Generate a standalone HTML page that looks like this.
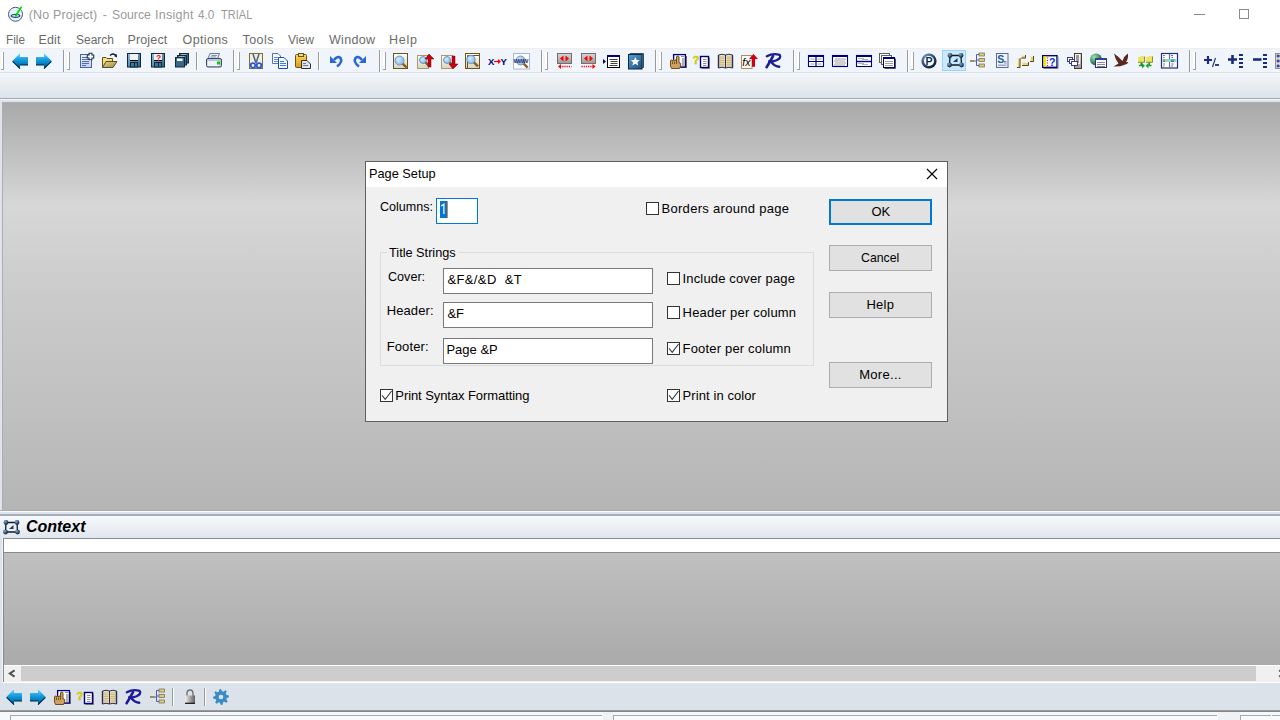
<!DOCTYPE html>
<html><head><meta charset="utf-8">
<style>
*{margin:0;padding:0;box-sizing:border-box}
html,body{width:1280px;height:720px;overflow:hidden;background:#fff;font-family:"Liberation Sans",sans-serif;position:relative}
.a{position:absolute}
.t{position:absolute;white-space:pre;font-family:"Liberation Sans",sans-serif}
.edit{position:absolute;background:#fff;border:1px solid #7a7a7a}
.btn{position:absolute;background:#e1e1e1;border:1px solid #adadad;width:103px;height:26px}
.cb{position:absolute;width:13px;height:13px;border:1px solid #333;background:#fff}
.sep{position:absolute;width:1px;background:#a0a0a0}
svg{position:absolute;overflow:visible}
</style></head><body>
<!-- title bar -->
<div class="a" style="left:1194px;top:14px;width:11px;height:1px;background:#8a8a8a"></div>
<div class="a" style="left:1239px;top:9px;width:10px;height:10px;border:1px solid #8a8a8a"></div>

<!-- toolbars -->
<div class="a" style="left:0;top:48px;width:1280px;height:1px;background:#efefef"></div>
<div class="a" style="left:0;top:49px;width:1280px;height:1px;background:#f2f4f8"></div>
<div class="a" style="left:0;top:50px;width:1280px;height:22px;background:#f0f4fb"></div>
<div class="a" style="left:0;top:72px;width:1280px;height:1px;background:#dde2e9"></div>
<div class="a" style="left:0;top:73px;width:1280px;height:25px;background:linear-gradient(#f3f6fa,#dde3ea)"></div>
<div class="a" style="left:0;top:98px;width:1280px;height:1px;background:#a3a8ae"></div>
<div class="a" style="left:0;top:99px;width:1280px;height:1px;background:#f4f7fc"></div>
<div class="a" style="left:0;top:100px;width:1280px;height:410px;background:#dfe4eb"></div>
<div class="a" style="left:2px;top:102px;width:1278px;height:408px;border-left:1px solid #a9aeb4;border-top:1px solid #a9aeb4;background:linear-gradient(#a9a9a9 0px,#d7d7d7 102px,#cacaca 197px,#c1c1c1 297px,#b5b5b5 407px)"></div>
<div class="a" style="left:0;top:510px;width:1280px;height:1px;background:#acacac"></div>
<div class="a" style="left:0;top:511px;width:1280px;height:1px;background:#f5f8fc"></div>
<div class="a" style="left:0;top:512px;width:1280px;height:2px;background:#dde3ea"></div>
<div class="a" style="left:0;top:514px;width:1280px;height:2px;background:#a6adb6"></div>
<div class="a" style="left:0;top:516px;width:1280px;height:22px;background:linear-gradient(#f6f9fd,#e0e6ee)"></div>
<div class="a" style="left:0;top:538px;width:3px;height:145px;background:#dde3ea"></div>
<div class="a" style="left:2px;top:538px;width:1px;height:145px;background:#f0f4f8"></div>
<div class="a" style="left:3px;top:538px;width:1277px;height:15px;border:1px solid #8a8a8a;border-right:none;background:#fff"></div>
<div class="a" style="left:3px;top:553px;width:1277px;height:112px;border-left:1px solid #8a8a8a;background:linear-gradient(#c0c0c0,#aaaaaa)"></div>
<div class="a" style="left:4px;top:665px;width:1276px;height:1px;background:#fff"></div>
<div class="a" style="left:3px;top:666px;width:1277px;height:16px;border-left:1px solid #8a8a8a;background:#f0f0f0"></div>
<div class="a" style="left:21px;top:666px;width:1235px;height:15px;background:#cdcdcd"></div>
<svg style="left:0px;top:660px" width="20" height="20"><path d="M14.6 10.3 L9.8 13.5 L14.6 16.7" fill="none" stroke="#505050" stroke-width="2"/></svg>
<svg style="left:1270px;top:660px" width="20" height="20"><path d="M9.2 10.3 L14 13.5 L9.2 16.7" fill="none" stroke="#505050" stroke-width="2"/></svg>
<div class="a" style="left:3px;top:538px;width:1px;height:144px;background:#8a8a8a"></div>
<div class="a" style="left:3px;top:682px;width:1277px;height:1px;background:#fff"></div>
<div class="a" style="left:0;top:683px;width:1280px;height:27px;background:#dce2ea"></div>
<div class="a" style="left:0;top:710px;width:1280px;height:1px;background:#9a9a9a"></div>
<div class="a" style="left:0;top:711px;width:1280px;height:1px;background:#858585"></div>
<div class="a" style="left:0;top:712px;width:1280px;height:8px;background:#f5f8fc"></div>
<div class="a" style="left:10px;top:715px;width:592px;height:10px;border-left:1px solid #a5aab2;border-top:1px solid #a5aab2;background:#f8fafc"></div>
<div class="a" style="left:613px;top:715px;width:604px;height:10px;border-left:1px solid #a5aab2;border-top:1px solid #a5aab2;background:#f8fafc"></div>
<div class="a" style="left:1240px;top:715px;width:31px;height:10px;border-left:1px solid #a5aab2;border-top:1px solid #a5aab2;background:#f8fafc"></div>
<div class="a" style="left:1272px;top:715px;width:8px;height:10px;border-top:1px solid #a5aab2;background:#f8fafc"></div>
<div class="a" style="left:1218px;top:712px;width:22px;height:8px;background:#eef1f6"></div>
<div class="a" style="left:603px;top:712px;width:10px;height:8px;background:#eef1f6"></div>

<!-- dialog -->
<div class="a" style="left:365px;top:161px;width:583px;height:261px;border:1px solid #5f5f5f;background:#f0f0f0"></div>
<div class="a" style="left:366px;top:162px;width:581px;height:25px;background:#fff"></div>
<svg style="left:926px;top:168px" width="12" height="12"><path d="M1 1 L11 11 M11 1 L1 11" stroke="#000" stroke-width="1.1"/></svg>
<div class="edit" style="left:436px;top:198px;width:42px;height:26px;border-color:#0078d7"></div>
<div class="a" style="left:440px;top:201px;width:7px;height:17px;background:#0078d7"></div>
<div class="a" style="left:447px;top:201px;width:1px;height:17px;background:#f08020"></div><svg style="left:430px;top:190px" width="30" height="30"><path d="M11.2 15.9 L13.9 14.2 V24" fill="none" stroke="#fff" stroke-width="1.2"/></svg>
<div class="cb" style="left:646px;top:202px"></div>
<!-- group -->
<div class="a" style="left:380px;top:252px;width:434px;height:114px;border:1px solid #dcdcdc"></div>
<div class="a" style="left:387px;top:248px;width:72px;height:8px;background:#f0f0f0"></div>
<div class="edit" style="left:443px;top:268px;width:210px;height:26px"></div>
<div class="edit" style="left:443px;top:302px;width:210px;height:26px"></div>
<div class="edit" style="left:443px;top:338px;width:210px;height:26px"></div>
<div class="cb" style="left:667px;top:272px"></div>
<div class="cb" style="left:667px;top:306px"></div>
<div class="cb" style="left:667px;top:342px"><svg style="left:-1px;top:-1px" width="13" height="13"><path d="M2 6.2 L5.2 10.3 L11.6 2" fill="none" stroke="#333" stroke-width="1.05"/></svg></div>
<div class="cb" style="left:380px;top:389px"><svg style="left:-1px;top:-1px" width="13" height="13"><path d="M2 6.2 L5.2 10.3 L11.6 2" fill="none" stroke="#333" stroke-width="1.05"/></svg></div>
<div class="cb" style="left:667px;top:389px"><svg style="left:-1px;top:-1px" width="13" height="13"><path d="M2 6.2 L5.2 10.3 L11.6 2" fill="none" stroke="#333" stroke-width="1.05"/></svg></div>
<div class="btn" style="left:829px;top:199px;border:2px solid #0078d7"></div>
<div class="btn" style="left:829px;top:245px"></div>
<div class="btn" style="left:829px;top:292px"></div>
<div class="btn" style="left:829px;top:362px"></div>

<svg style="left:0;top:0" width="1280" height="720" viewBox="0 0 1280 720">
<defs>
<linearGradient id="gArrow" x1="0" y1="0" x2="0" y2="1">
 <stop offset="0" stop-color="#7fd6ff"/><stop offset="0.35" stop-color="#1ea5e6"/><stop offset="0.75" stop-color="#0077b8"/><stop offset="1" stop-color="#003a66"/>
</linearGradient>
<linearGradient id="gFloppy" x1="0" y1="0" x2="1" y2="1">
 <stop offset="0" stop-color="#8cc0dc"/><stop offset="1" stop-color="#2a5f80"/>
</linearGradient>
<linearGradient id="gPage" x1="0" y1="0" x2="0" y2="1">
 <stop offset="0" stop-color="#ffffff"/><stop offset="1" stop-color="#d8d4c0"/>
</linearGradient>
<linearGradient id="gGrayBox" x1="0" y1="0" x2="0" y2="1">
 <stop offset="0" stop-color="#d8d8d8"/><stop offset="1" stop-color="#9a9a9a"/>
</linearGradient>
<linearGradient id="gStar" x1="0" y1="0" x2="1" y2="1">
 <stop offset="0" stop-color="#5aa0d8"/><stop offset="1" stop-color="#1a4e80"/>
</linearGradient>
<linearGradient id="gGold" x1="0" y1="0" x2="0" y2="1">
 <stop offset="0" stop-color="#f0e4a0"/><stop offset="1" stop-color="#a89040"/>
</linearGradient>
<linearGradient id="gFolder" x1="0" y1="0" x2="1" y2="1">
 <stop offset="0" stop-color="#e8d890"/><stop offset="1" stop-color="#a08848"/>
</linearGradient>
<radialGradient id="gLens" cx="0.4" cy="0.4" r="0.6">
 <stop offset="0" stop-color="#d8eefc"/><stop offset="1" stop-color="#88b8e8"/>
</radialGradient>
<radialGradient id="gBall" cx="0.35" cy="0.3" r="0.7">
 <stop offset="0" stop-color="#7aa8d0"/><stop offset="1" stop-color="#0a2038"/>
</radialGradient>
<radialGradient id="gGlobe" cx="0.35" cy="0.3" r="0.7">
 <stop offset="0" stop-color="#a0e0b0"/><stop offset="1" stop-color="#0a6030"/>
</radialGradient>
<linearGradient id="gLock" x1="0" y1="0" x2="1" y2="0">
 <stop offset="0" stop-color="#f0f0f0"/><stop offset="1" stop-color="#606060"/>
</linearGradient>
<linearGradient id="gClip" x1="0" y1="0" x2="0" y2="1">
 <stop offset="0" stop-color="#ffd860"/><stop offset="1" stop-color="#d89a10"/>
</linearGradient>
</defs>
<g transform="translate(8,6)"><circle cx="7.5" cy="8.3" r="7" fill="#eaf2fc" stroke="#3a5a90" stroke-width="1"/><ellipse cx="7.5" cy="9.8" rx="4.3" ry="1.5" fill="none" stroke="#2a4a80" stroke-width="1.3"/><path d="M7.3 10.5 L13.5 0.8" stroke="#00e000" stroke-width="1.8"/></g><rect x="1" y="52" width="2" height="18" fill="#ffffff"/><rect x="3" y="52" width="1" height="18" fill="#a0a0a0"/><rect x="1" y="69" width="3" height="1" fill="#a0a0a0"/><rect x="67" y="52" width="2" height="18" fill="#ffffff"/><rect x="69" y="52" width="1" height="18" fill="#a0a0a0"/><rect x="67" y="69" width="3" height="1" fill="#a0a0a0"/><rect x="237" y="52" width="2" height="18" fill="#ffffff"/><rect x="239" y="52" width="1" height="18" fill="#a0a0a0"/><rect x="237" y="69" width="3" height="1" fill="#a0a0a0"/><rect x="383" y="52" width="2" height="18" fill="#ffffff"/><rect x="385" y="52" width="1" height="18" fill="#a0a0a0"/><rect x="383" y="69" width="3" height="1" fill="#a0a0a0"/><rect x="545" y="52" width="2" height="18" fill="#ffffff"/><rect x="547" y="52" width="1" height="18" fill="#a0a0a0"/><rect x="545" y="69" width="3" height="1" fill="#a0a0a0"/><rect x="659" y="52" width="2" height="18" fill="#ffffff"/><rect x="661" y="52" width="1" height="18" fill="#a0a0a0"/><rect x="659" y="69" width="3" height="1" fill="#a0a0a0"/><rect x="797" y="52" width="2" height="18" fill="#ffffff"/><rect x="799" y="52" width="1" height="18" fill="#a0a0a0"/><rect x="797" y="69" width="3" height="1" fill="#a0a0a0"/><rect x="911" y="52" width="2" height="18" fill="#ffffff"/><rect x="913" y="52" width="1" height="18" fill="#a0a0a0"/><rect x="911" y="69" width="3" height="1" fill="#a0a0a0"/><rect x="1193" y="52" width="2" height="18" fill="#ffffff"/><rect x="1195" y="52" width="1" height="18" fill="#a0a0a0"/><rect x="1193" y="69" width="3" height="1" fill="#a0a0a0"/><rect x="63" y="50" width="1" height="22" fill="#999999"/><rect x="64" y="50" width="1" height="22" fill="#ffffff"/><rect x="233" y="50" width="1" height="22" fill="#999999"/><rect x="234" y="50" width="1" height="22" fill="#ffffff"/><rect x="379" y="50" width="1" height="22" fill="#999999"/><rect x="380" y="50" width="1" height="22" fill="#ffffff"/><rect x="541" y="50" width="1" height="22" fill="#999999"/><rect x="542" y="50" width="1" height="22" fill="#ffffff"/><rect x="655" y="50" width="1" height="22" fill="#999999"/><rect x="656" y="50" width="1" height="22" fill="#ffffff"/><rect x="793" y="50" width="1" height="22" fill="#999999"/><rect x="794" y="50" width="1" height="22" fill="#ffffff"/><rect x="907" y="50" width="1" height="22" fill="#999999"/><rect x="908" y="50" width="1" height="22" fill="#ffffff"/><rect x="1189" y="50" width="1" height="22" fill="#999999"/><rect x="1190" y="50" width="1" height="22" fill="#ffffff"/><rect x="196" y="52" width="1" height="18" fill="#999999"/><rect x="197" y="52" width="1" height="18" fill="#ffffff"/><rect x="318" y="52" width="1" height="18" fill="#999999"/><rect x="319" y="52" width="1" height="18" fill="#ffffff"/><rect x="942.5" y="50.5" width="23" height="20" fill="#cce8ff" stroke="#99d1ff"/><g transform="translate(12,53)"><path d="M0.3 8 L8 0.3 L8 4 L16 4 L16 12 L8 12 L8 15.7 Z" fill="url(#gArrow)"/><path d="M0.6 8.3 L8 15.6 M8 12 L16 12" stroke="#00263f" stroke-width="1.1" fill="none"/></g><g transform="translate(36,53)"><path d="M15.7 8 L8 0.3 L8 4 L0 4 L0 12 L8 12 L8 15.7 Z" fill="url(#gArrow)"/><path d="M15.4 8.3 L8 15.6 M8 12 L0 12" stroke="#00263f" stroke-width="1.1" fill="none"/></g><g transform="translate(80,53)"><rect x="0.5" y="1.5" width="11" height="13" fill="#e4ecfc" stroke="#4a64a0"/><rect x="1" y="9" width="10" height="5" fill="#c8d8f8"/><path d="M2 4.5H9 M2 6.5H9 M2 8.5H9 M2 10.5H9 M2 12.5H6" stroke="#5a6a98" stroke-width="1"/><polygon points="8.50,-0.30 12.50,-0.30 12.50,1.50 14.30,1.50 14.30,5.50 12.50,5.50 12.50,7.30 8.50,7.30 8.50,5.50 6.70,5.50 6.70,1.50 8.50,1.50" fill="#163050"/><polygon points="9.60,0.80 11.40,0.80 11.40,2.60 13.20,2.60 13.20,4.40 11.40,4.40 11.40,6.20 9.60,6.20 9.60,4.40 7.80,4.40 7.80,2.60 9.60,2.60" fill="#fff"/></g><g transform="translate(102,53)"><path d="M0.5 4.5 H4 L5 5.5 H10.5 V14.5 H0.5 Z" fill="#f8dc80" stroke="#5a5020"/><path d="M0.5 14.5 L4 8.5 H15 L11 14.5 Z" fill="url(#gFolder)" stroke="#5a5020"/><path d="M8 2.5 Q11 -0.5 14 2.5" stroke="#111" stroke-width="1.2" fill="none"/><path d="M12 3 L15 4.5 L14.6 1 Z" fill="#111"/></g><g transform="translate(127,53)"><rect x="0.5" y="0.5" width="13" height="13.5" fill="url(#gFloppy)" stroke="#10283a"/><rect x="3" y="1" width="8" height="6" fill="#eef2f4"/><path d="M3 7.5 H11" stroke="#000" stroke-width="1"/><rect x="3.5" y="9.5" width="7" height="4.5" fill="#3a78a0" stroke="#10283a"/><rect x="7" y="10" width="1" height="4" fill="#10283a"/></g><g transform="translate(151,53)"><rect x="0.5" y="0.5" width="13" height="13.5" fill="url(#gFloppy)" stroke="#10283a"/><rect x="3" y="1" width="8" height="6" fill="#eef2f4"/><path d="M3 7.5 H11" stroke="#000" stroke-width="1"/><rect x="3.5" y="9.5" width="7" height="4.5" fill="#3a78a0" stroke="#10283a"/><rect x="7" y="10" width="1" height="4" fill="#10283a"/><text x="5" y="7.5" font-family="Liberation Sans" font-weight="bold" font-size="8.5" fill="#ff1010">?</text></g><g transform="translate(175,53)"><g transform="translate(4,0)"><rect x="0.5" y="0.5" width="9" height="9.5" fill="#3a6888" stroke="#10283a"/><rect x="2" y="1.5" width="5.5" height="2.5" fill="#fff"/></g><g transform="translate(2,2)"><rect x="0.5" y="0.5" width="9" height="9.5" fill="#3a6888" stroke="#10283a"/><rect x="2" y="1.5" width="5.5" height="2.5" fill="#fff"/></g><g transform="translate(0,4)"><rect x="0.5" y="0.5" width="9" height="9.5" fill="#3a6888" stroke="#10283a"/><rect x="2" y="1.5" width="5.5" height="2.5" fill="#fff"/></g></g><g transform="translate(206,53)"><path d="M4 0.5 H13.5 L11.5 5.5 H2 Z" fill="#e8ecf4" stroke="#6a7a98"/><path d="M5.5 2.5 H11 M4.5 4 H10" stroke="#8090b0"/><rect x="0.5" y="5.5" width="15" height="8.5" rx="1.5" fill="#b8c4d8" stroke="#3a4a68"/><rect x="1.5" y="8" width="12" height="5" fill="#eef2fa"/><rect x="11" y="8.5" width="3" height="3" fill="#00d000"/></g><g transform="translate(249,53)"><rect x="0.5" y="0.5" width="13" height="15" fill="#f2efe6" stroke="#7a7030"/><path d="M4 1 L7 10 M10 1 L7 10" stroke="#5a6878" stroke-width="1.6"/><circle cx="4" cy="12.5" r="2.3" fill="none" stroke="#2a58d0" stroke-width="1.8"/><circle cx="10" cy="12.5" r="2.3" fill="none" stroke="#2a58d0" stroke-width="1.8"/></g><g transform="translate(272,53)"><path d="M0.5 0.5 H6 L8.5 3 V10.5 H0.5 Z" fill="#f8f8ff" stroke="#5a70a0"/><path d="M2 4.5H6 M2 6.5H6 M2 8.5H6" stroke="#5a8ad8"/><path d="M6.5 4.5 H12 L15.5 8 V15.5 H6.5 Z" fill="#f8f8ff" stroke="#1a4ab0"/><path d="M8 8.5H12 M8 10.5H14 M8 12.5H14" stroke="#3a7ae0"/></g><g transform="translate(295,53)"><rect x="0.5" y="1.5" width="11" height="13" rx="1" fill="url(#gClip)" stroke="#6a5020"/><rect x="3.5" y="0.5" width="5" height="3" fill="#e8d890" stroke="#6a5020"/><path d="M6.5 7.5 H12 L15.5 11 V15.5 H6.5 Z" fill="#dce4f0" stroke="#3a3020"/><path d="M8 10.5H11 M8 12.5H13" stroke="#6a7a98"/></g><g transform="translate(330,53)"><path d="M4 7 Q7.5 2.5 10.5 5 Q13 9 7 13.5" stroke="#2a66d8" stroke-width="2.5" fill="none"/><path d="M0 3 L0 10 L7 10 Z" fill="#2a66d8"/></g><g transform="translate(354,53)"><path d="M8 7 Q4.5 2.5 1.5 5 Q-1 9 5 13.5" stroke="#2a66d8" stroke-width="2.5" fill="none"/><path d="M12 3 L12 10 L5 10 Z" fill="#2a66d8"/></g><g transform="translate(393,53)"><rect x="0.5" y="0.5" width="14" height="15" fill="url(#gPage)" stroke="#6a5418"/><circle cx="6.5" cy="7.5" r="4.5" fill="url(#gLens)" stroke="#6a98d0" stroke-width="1"/><path d="M9.65 10.65 L13.65 14.65" stroke="#8a6020" stroke-width="2.4"/></g><g transform="translate(417,53)"><rect x="0.5" y="2.5" width="11" height="13" fill="url(#gPage)" stroke="#b09860"/><circle cx="6" cy="7" r="3.5" fill="url(#gLens)" stroke="#6a98d0" stroke-width="1"/><path d="M8.45 9.45 L12.45 13.45" stroke="#8a6020" stroke-width="2.4"/><path d="M12 1 L17 6 H14 V14 H11 V6 H8 Z" fill="#c80010" stroke="#800008" stroke-width="0.5"/></g><g transform="translate(441,53)"><rect x="0.5" y="2.5" width="11" height="13" fill="url(#gPage)" stroke="#b09860"/><circle cx="6" cy="7" r="3.5" fill="url(#gLens)" stroke="#6a98d0" stroke-width="1"/><path d="M8.45 9.45 L12.45 13.45" stroke="#8a6020" stroke-width="2.4"/><path d="M12 16 L17 11 H14 V3 H11 V11 H8 Z" fill="#c80010" stroke="#800008" stroke-width="0.5"/></g><g transform="translate(465,53)"><rect x="0.5" y="0.5" width="14" height="15" fill="url(#gPage)" stroke="#6a5418"/><path d="M2.5 15 V2.5 H14" stroke="#6a5418" fill="none"/><circle cx="6" cy="6.5" r="4.2" fill="url(#gLens)" stroke="#6a98d0" stroke-width="1"/><path d="M8.94 9.44 L12.94 13.44" stroke="#8a6020" stroke-width="2.4"/></g><g transform="translate(488,53)"><text x="0" y="12" font-family="Liberation Sans" font-weight="bold" font-size="9.5" fill="#000080">X</text><path d="M6 8.5 H11" stroke="#ff0000" stroke-width="1.3"/><path d="M10 6 L13 8.5 L10 11 Z" fill="#f00"/><text x="12.5" y="12" font-family="Liberation Sans" font-weight="bold" font-size="9.5" fill="#000080">Y</text></g><g transform="translate(513,53)"><rect x="0.5" y="0.5" width="16" height="15.5" fill="#fff" stroke="#a8b8d8"/><circle cx="7.5" cy="7.5" r="4.5" fill="url(#gLens)" stroke="#6a98d0" stroke-width="1"/><path d="M10.65 10.65 L14.65 14.65" stroke="#8a6020" stroke-width="2.4"/><text x="0.5" y="9.5" font-family="Liberation Sans" font-weight="bold" font-size="6" fill="#303068" textLength="15">WWW</text></g><g transform="translate(557,53)"><rect x="0.5" y="0.5" width="14" height="10" fill="url(#gGrayBox)" stroke="#707070"/><path d="M3 5.5 L6.5 2.5 V8.5 Z M12 5.5 L8.5 2.5 V8.5 Z" fill="#f00"/><path d="M1 13.5 L4 11 V16 Z" fill="#f00"/><path d="M3 13.5 H14.5" stroke="#f00" stroke-width="1.3" stroke-dasharray="1.2 1"/></g><g transform="translate(581,53)"><rect x="0.5" y="0.5" width="14" height="10" fill="url(#gGrayBox)" stroke="#707070"/><path d="M3 5.5 L6.5 2.5 V8.5 Z M12 5.5 L8.5 2.5 V8.5 Z" fill="#f00"/><path d="M14.5 13.5 L11.5 11 V16 Z" fill="#f00"/><path d="M0.5 13.5 H12" stroke="#f00" stroke-width="1.3" stroke-dasharray="1.2 1"/></g><g transform="translate(603,53)"><path d="M0 6 L3 8.5 L0 11 Z" fill="#000080"/><rect x="4.5" y="2.5" width="12" height="12" fill="#fff" stroke="#000"/><rect x="4" y="2" width="13" height="2" fill="#000080"/><path d="M6.5 6.5H14.5 M7.5 8.5H14.5 M7.5 10.5H14.5 M6.5 12.5H14.5" stroke="#404040"/></g><g transform="translate(628,53)"><path d="M2 0.5 H15.5 V14.5 H2 Z" fill="#6a8aa0" stroke="#3a5060"/><rect x="0.5" y="1.5" width="13.5" height="14.5" fill="url(#gStar)" stroke="#0a2a48"/><path d="M7.3 4 L8.6 7 L11.8 7.2 L9.4 9.3 L10.2 12.4 L7.3 10.7 L4.4 12.4 L5.2 9.3 L2.8 7.2 L6 7 Z" fill="#fff"/></g><g transform="translate(670,53)"><rect x="16" y="3" width="1" height="12" fill="#707070"/><rect x="5" y="14" width="12" height="1" fill="#707070"/><rect x="3.6" y="1.6" width="11.8" height="12.4" fill="#fff" stroke="#00007f" stroke-width="1.3"/><rect x="12" y="5" width="2.5" height="8" fill="#b0b0b0"/><path d="M11 3.5H14" stroke="#909090"/><path d="M0.5 8 Q0.5 7 1.5 7 Q2.5 7 2.5 8 Q2.5 7 3.5 7 Q4.5 7 4.5 8 Q4.5 7 5.5 7 Q6.5 7 6.5 8 V4 Q6.5 3 7.7 3 Q9 3 9 4 V10 Q10.5 9.5 10.7 10.5 V13 L9.5 15.5 H1.5 L0.5 13 Z" fill="#d0a060" stroke="#604010" stroke-width="0.9"/><path d="M2.5 8.5V11 M4.5 8.5V11 M6.5 8V11" stroke="#604010" stroke-width="0.8"/></g><g transform="translate(693,53)"><text x="-0.5" y="10.5" font-family="Liberation Sans" font-weight="bold" font-size="11.5" fill="#f4f000" stroke="#b0a800" stroke-width="0.4">?</text><rect x="7.5" y="3.5" width="8" height="11" fill="#fff" stroke="#000080" stroke-width="1.4"/><path d="M10 6.5H13.5 M10 8.5H13.5 M10 10.5H13.5 M10 12.5H13.5" stroke="#909090"/><path d="M8.5 15.5 H16.5 V4.5" stroke="#707070" fill="none"/></g><g transform="translate(718,53)"><path d="M0.5 2 Q4 0.5 7.5 2 V15 Q4 13.5 0.5 15 Z" fill="#efe6bc" stroke="#302860"/><path d="M7.5 2 Q11 0.5 14.5 2 V15 Q11 13.5 7.5 15 Z" fill="#efe6bc" stroke="#302860"/><path d="M1.5 4H6.5 M1.5 5.8H6.5 M1.5 7.6H6.5 M1.5 9.4H6.5 M1.5 11.2H6.5 M1.5 13H6.5 M8.5 4H13.5 M8.5 5.8H13.5 M8.5 7.6H13.5 M8.5 9.4H13.5 M8.5 11.2H13.5 M8.5 13H13.5" stroke="#b8a868" stroke-width="0.8"/><path d="M0.5 2 V15 M14.5 2 V15" stroke="#302860" stroke-width="1.4"/></g><g transform="translate(741,53)"><rect x="0.5" y="2.5" width="10.5" height="13" fill="#fcfaf0" stroke="#a89060"/><text x="1.3" y="12.8" font-family="Liberation Sans" font-style="italic" font-size="10.5" fill="#000">fx</text><path d="M12.5 1 L17 6 H14 V13.7 H11 V6 H8 Z" fill="#d00010"/></g><g transform="translate(765,53)"><g stroke="#1c1c98" fill="none" stroke-linecap="round"><path d="M1.8 3.2 Q8 0 14.5 1.8 Q17 4.8 11.5 7.3 Q7.5 9 4.2 8.2" stroke-width="2.3"/><path d="M8 3.2 Q5 9 1.6 14.2" stroke-width="2.6"/><path d="M6 8.8 Q10 13.8 14.2 13.8" stroke-width="2.4"/></g></g><g transform="translate(808,53)"><g transform="translate(0,2)"><rect x="0.5" y="0.5" width="15" height="11" fill="#fff" stroke="#00007f" stroke-width="1.1"/><rect x="0" y="0" width="16" height="2" fill="#00007f"/><path d="M8 1 V12 M1 6.5 H15" stroke="#00007f" stroke-width="1.2"/><path d="M2.5 4H6.5 M9.5 4H13.5 M2.5 9H6.5 M9.5 9H13.5" stroke="#a0a0a0"/></g></g><g transform="translate(832,53)"><g transform="translate(0,2)"><rect x="0.5" y="0.5" width="15" height="11" fill="#fff" stroke="#00007f" stroke-width="1.1"/><rect x="0" y="0" width="16" height="2" fill="#00007f"/><path d="M3 4H14 M2 6H13 M3 8H14 M2 10H13" stroke="#a0a0a0"/></g></g><g transform="translate(856,53)"><g transform="translate(0,2)"><rect x="0.5" y="0.5" width="15" height="11" fill="#fff" stroke="#00007f" stroke-width="1.1"/><rect x="0" y="0" width="16" height="2" fill="#00007f"/><path d="M1 6.5 H15" stroke="#00007f" stroke-width="1.4"/><path d="M2 3.5H8 M6 4.5H12 M2 8.5H8 M6 9.5H12" stroke="#a0a0a0" stroke-width="0.8"/></g></g><g transform="translate(879,53)"><rect x="0.5" y="0.5" width="10" height="9" fill="#fff" stroke="#606060"/><rect x="2.5" y="2.5" width="10" height="9" fill="#fff" stroke="#606060"/><rect x="4.5" y="4.5" width="11" height="10" fill="#fff" stroke="#00007f"/><rect x="4" y="4" width="12" height="2" fill="#00007f"/><path d="M6 8.5H14 M6 10.5H14 M6 12.5H14" stroke="#a0a0a0"/><path d="M5.5 15.5 H16.5 V5.5" stroke="#505050" fill="none"/></g><g transform="translate(921,53)"><circle cx="8" cy="8" r="7.6" fill="url(#gBall)"/><circle cx="8" cy="8" r="5" fill="#fff"/><text x="4.6" y="12.3" font-family="Liberation Sans" font-weight="bold" font-size="10.5" fill="#0a3058">P</text></g><g transform="translate(947,53)"><path d="M3 2.5 H14 M2.5 12 H14 M3 2.5 L2.5 12 M14 2.5 L14.5 12" stroke="#101820" stroke-width="1.3"/><path d="M6 9 L10.5 5 V9 Z" fill="#1a3a68"/><circle cx="3" cy="2.5" r="2.4" fill="url(#gBall)"/><circle cx="14" cy="2.5" r="2.4" fill="url(#gBall)"/><circle cx="2.5" cy="12" r="2.4" fill="url(#gBall)"/><circle cx="14.5" cy="12" r="2.4" fill="url(#gBall)"/></g><g transform="translate(970,53)"><path d="M0 8 H4.6" stroke="#8a7a30" stroke-width="1.6"/><path d="M6.5 1.5 V12.5 M6.5 1.5 H9 M6.5 7 H9 M6.5 12.5 H9 M4.6 8 H6.5" stroke="#4a5ad0" fill="none" stroke-width="1"/><rect x="9" y="0" width="5.5" height="3" fill="#d8c890" stroke="#7a6a30" stroke-width="0.7"/><rect x="9" y="5.5" width="5.5" height="3" fill="#d8c890" stroke="#7a6a30" stroke-width="0.7"/><rect x="9" y="11" width="5.5" height="3" fill="#d8c890" stroke="#7a6a30" stroke-width="0.7"/></g><g transform="translate(996,53)"><rect x="0.5" y="0.5" width="11.5" height="14" fill="#f2f4fa" stroke="#5a6aa0"/><text x="1.2" y="9.5" font-family="Liberation Sans" font-weight="bold" font-size="10.5" fill="#1a5ab0">S</text><path d="M8 8.5H10.5 M8 10H10.5 M2 12.2H10.5" stroke="#5a6a98" stroke-width="0.8"/></g><g transform="translate(1017,53)"><rect x="0" y="5" width="3.5" height="10" fill="#e0d090"/><path d="M0 14.5 H3.0 V5" stroke="#5a4a18" stroke-width="1" fill="none"/><path d="M0.5 14 V5.5 H2.5" stroke="#f8f0c0" stroke-width="1" fill="none"/><rect x="4" y="2" width="5" height="3.5" fill="#e0d090"/><path d="M4 5.0 H8.5 V2" stroke="#5a4a18" stroke-width="1" fill="none"/><path d="M4.5 4.5 V2.5 H8" stroke="#f8f0c0" stroke-width="1" fill="none"/><rect x="5" y="9" width="7" height="4" fill="#e0d090"/><path d="M5 12.5 H11.5 V9" stroke="#5a4a18" stroke-width="1" fill="none"/><path d="M5.5 12 V9.5 H11" stroke="#f8f0c0" stroke-width="1" fill="none"/><rect x="13" y="3" width="4" height="6" fill="#e0d090"/><path d="M13 8.5 H16.5 V3" stroke="#5a4a18" stroke-width="1" fill="none"/><path d="M13.5 8 V3.5 H16" stroke="#f8f0c0" stroke-width="1" fill="none"/></g><g transform="translate(1042,53)"><rect x="0.7" y="2.7" width="14.3" height="11.6" fill="#fff" stroke="#00007f" stroke-width="1.4"/><rect x="1.4" y="3.4" width="2.6" height="10.2" fill="#f0f000"/><path d="M2 4V13" stroke="#c0c000" stroke-width="0.8" stroke-dasharray="1 1"/><path d="M5.5 4.5V5.5 M5.5 7V8 M5.5 9.5V10.5 M5.5 12V13" stroke="#f00" stroke-width="1.2"/><text x="7" y="12.5" font-family="Liberation Sans" font-weight="bold" font-size="10.5" fill="#0030e0">?</text><path d="M1.5 15.5 H16 V3.5" stroke="#808080" fill="none"/></g><g transform="translate(1067,53)"><rect x="7.5" y="0.5" width="7" height="15" fill="url(#gGrayBox)" stroke="#4a3a20"/><rect x="8" y="1" width="5" height="10" fill="#f4f4f4"/><path d="M9 3H12 M9 5H12 M9 7H12 M9 9H12" stroke="#404040"/><rect x="0.5" y="4.5" width="5" height="4" fill="#fff" stroke="#3a3a90"/><rect x="2.5" y="6.5" width="5" height="4" fill="#fff" stroke="#3a3a90"/><rect x="4.5" y="8.5" width="6" height="4" fill="#fff" stroke="#3a3a90"/></g><g transform="translate(1090,53)"><circle cx="6" cy="6.5" r="6" fill="url(#gGlobe)"/><rect x="5.5" y="5.5" width="11" height="9" fill="#fff" stroke="#2a2a90"/><rect x="5" y="5" width="12" height="2" fill="#3a3aa0"/><path d="M7 9.5H15 M7 11.5H15 M7 13.5H15" stroke="#707070" stroke-width="0.8"/></g><g transform="translate(1113,53)"><path d="M1 0.5 Q2 6 5.5 10.5 Q3 12 0.5 13.5 Q7 13.8 11 12 Q14 11 15.5 9.5 Q14.5 8.8 13 9.2 Q15.8 5 14.8 0.5 Q11 3 9.5 8 Q6 4 1 0.5 Z" fill="#5a2820"/></g><g transform="translate(1138,53)"><g transform="translate(0,2)"><path d="M0 2 H2 L3 1 H6.5 V7.5 H0 Z" fill="#ece468"/><path d="M0 7.3 H6.5 V1.5" stroke="#8a8020" stroke-width="0.9" fill="none"/><path d="M8 2 H10 L11 1 H14.5 V7.5 H8 Z" fill="#ece468"/><path d="M8 7.3 H14.5 V1.5" stroke="#8a8020" stroke-width="0.9" fill="none"/><path d="M3.3 7.5 V10.5 H1" stroke="#10a020" stroke-width="1.6" fill="none"/><path d="M4 8 L6.8 10.8 L4 13.6 Z" fill="#10a020"/><path d="M11.2 7.5 V10.5 H13.5" stroke="#10a020" stroke-width="1.6" fill="none"/><path d="M10.5 8 L7.7 10.8 L10.5 13.6 Z" fill="#10a020"/></g></g><g transform="translate(1161,53)"><rect x="0.5" y="0.5" width="16" height="14.5" fill="#fff" stroke="#2a2a80" stroke-width="1.2"/><path d="M8.5 1 V15" stroke="#707070" stroke-width="1.2"/><rect x="1.5" y="6" width="14" height="3" fill="#90d8c0"/><path d="M2 2.5H4 M2 4.5H3.5 M2 7H4 M2 8.5H4 M2 11H4 M2 13H3.5" stroke="#707070" stroke-width="0.9"/><path d="M10 2.5H12 M10.5 4.5H12 M10 7H13 M10 8.5H13 M10.5 11H12.5 M10 13H12" stroke="#2a5ad8" stroke-width="0.9"/></g><g transform="translate(1204,53)"><path d="M4 3 V11 M0 7 H8" stroke="#1a2a80" stroke-width="2.2"/><path d="M11.5 5 L8.5 14" stroke="#1a2a80" stroke-width="1.1"/><path d="M11 12 H15" stroke="#1a2a80" stroke-width="1.8"/></g><g transform="translate(1228,53)"><path d="M4.5 2 V11 M0 6.5 H9" stroke="#1a2a80" stroke-width="2.6"/><path d="M11 2H15 M11 6H15 M11 10H15 M11 14H15" stroke="#1a2a80" stroke-width="2"/></g><g transform="translate(1253,53)"><path d="M0 6.5 H8.5" stroke="#1a2a80" stroke-width="2.6"/><path d="M10 2H14 M10 6H14 M10 10H14 M10 14H14" stroke="#1a2a80" stroke-width="2"/></g><g transform="translate(1275,53)"><rect x="0.5" y="0.5" width="10" height="15" fill="#d8d8d8" stroke="#909090"/><path d="M1.5 3H5 M3 1.5V4.5 M1.5 8H5 M3 6.5V9.5 M1.5 13H5 M3 11.5V14.5" stroke="#1a2a80" stroke-width="1.2"/><path d="M5 12H6" stroke="#f00" stroke-width="1.2"/></g><g transform="translate(6,689)"><path d="M0.3 8 L8 0.3 L8 4 L16 4 L16 12 L8 12 L8 15.7 Z" fill="url(#gArrow)"/><path d="M0.6 8.3 L8 15.6 M8 12 L16 12" stroke="#00263f" stroke-width="1.1" fill="none"/></g><g transform="translate(30,689)"><path d="M15.7 8 L8 0.3 L8 4 L0 4 L0 12 L8 12 L8 15.7 Z" fill="url(#gArrow)"/><path d="M15.4 8.3 L8 15.6 M8 12 L0 12" stroke="#00263f" stroke-width="1.1" fill="none"/></g><g transform="translate(54,689)"><rect x="16" y="3" width="1" height="12" fill="#707070"/><rect x="5" y="14" width="12" height="1" fill="#707070"/><rect x="3.6" y="1.6" width="11.8" height="12.4" fill="#fff" stroke="#00007f" stroke-width="1.3"/><rect x="12" y="5" width="2.5" height="8" fill="#b0b0b0"/><path d="M11 3.5H14" stroke="#909090"/><path d="M0.5 8 Q0.5 7 1.5 7 Q2.5 7 2.5 8 Q2.5 7 3.5 7 Q4.5 7 4.5 8 Q4.5 7 5.5 7 Q6.5 7 6.5 8 V4 Q6.5 3 7.7 3 Q9 3 9 4 V10 Q10.5 9.5 10.7 10.5 V13 L9.5 15.5 H1.5 L0.5 13 Z" fill="#d0a060" stroke="#604010" stroke-width="0.9"/><path d="M2.5 8.5V11 M4.5 8.5V11 M6.5 8V11" stroke="#604010" stroke-width="0.8"/></g><g transform="translate(77,689)"><text x="-0.5" y="10.5" font-family="Liberation Sans" font-weight="bold" font-size="11.5" fill="#f4f000" stroke="#b0a800" stroke-width="0.4">?</text><rect x="7.5" y="3.5" width="8" height="11" fill="#fff" stroke="#000080" stroke-width="1.4"/><path d="M10 6.5H13.5 M10 8.5H13.5 M10 10.5H13.5 M10 12.5H13.5" stroke="#909090"/><path d="M8.5 15.5 H16.5 V4.5" stroke="#707070" fill="none"/></g><g transform="translate(102,689)"><path d="M0.5 2 Q4 0.5 7.5 2 V15 Q4 13.5 0.5 15 Z" fill="#efe6bc" stroke="#302860"/><path d="M7.5 2 Q11 0.5 14.5 2 V15 Q11 13.5 7.5 15 Z" fill="#efe6bc" stroke="#302860"/><path d="M1.5 4H6.5 M1.5 5.8H6.5 M1.5 7.6H6.5 M1.5 9.4H6.5 M1.5 11.2H6.5 M1.5 13H6.5 M8.5 4H13.5 M8.5 5.8H13.5 M8.5 7.6H13.5 M8.5 9.4H13.5 M8.5 11.2H13.5 M8.5 13H13.5" stroke="#b8a868" stroke-width="0.8"/><path d="M0.5 2 V15 M14.5 2 V15" stroke="#302860" stroke-width="1.4"/></g><g transform="translate(125,689)"><g stroke="#1c1c98" fill="none" stroke-linecap="round"><path d="M1.8 3.2 Q8 0 14.5 1.8 Q17 4.8 11.5 7.3 Q7.5 9 4.2 8.2" stroke-width="2.3"/><path d="M8 3.2 Q5 9 1.6 14.2" stroke-width="2.6"/><path d="M6 8.8 Q10 13.8 14.2 13.8" stroke-width="2.4"/></g></g><g transform="translate(150,689)"><path d="M0 8 H4.6" stroke="#8a7a30" stroke-width="1.6"/><path d="M6.5 1.5 V12.5 M6.5 1.5 H9 M6.5 7 H9 M6.5 12.5 H9 M4.6 8 H6.5" stroke="#4a5ad0" fill="none" stroke-width="1"/><rect x="9" y="0" width="5.5" height="3" fill="#d8c890" stroke="#7a6a30" stroke-width="0.7"/><rect x="9" y="5.5" width="5.5" height="3" fill="#d8c890" stroke="#7a6a30" stroke-width="0.7"/><rect x="9" y="11" width="5.5" height="3" fill="#d8c890" stroke="#7a6a30" stroke-width="0.7"/></g><g transform="translate(184,689)"><path d="M3 7 V4.5 Q3 1 6 1 Q9 1 9 4.5 V7" stroke="#707070" stroke-width="1.4" fill="none"/><rect x="1" y="6.5" width="10" height="7.5" fill="url(#gLock)"/><path d="M1 14.3 H11" stroke="#101010" stroke-width="1.2"/></g><g transform="translate(213,689)"><polygon points="8.00,0.00 9.56,0.15 10.22,2.64 11.22,3.18 13.66,2.34 14.65,3.56 13.36,5.78 13.69,6.87 16.00,8.00 15.85,9.56 13.36,10.22 12.82,11.22 13.66,13.66 12.44,14.65 10.22,13.36 9.13,13.69 8.00,16.00 6.44,15.85 5.78,13.36 4.78,12.82 2.34,13.66 1.35,12.44 2.64,10.22 2.31,9.13 0.00,8.00 0.15,6.44 2.64,5.78 3.18,4.78 2.34,2.34 3.56,1.35 5.78,2.64 6.87,2.31" fill="#3a8cc4" transform="rotate(-11 8 8)"/><circle cx="8" cy="8" r="2.3" fill="#dce2ea"/></g><rect x="172" y="688" width="1" height="18" fill="#999999"/><rect x="173" y="688" width="1" height="18" fill="#ffffff"/><rect x="204" y="688" width="1" height="18" fill="#999999"/><rect x="205" y="688" width="1" height="18" fill="#ffffff"/><g transform="translate(3,520)"><path d="M3 2.5 H14 M2.5 12 H14 M3 2.5 L2.5 12 M14 2.5 L14.5 12" stroke="#101820" stroke-width="1.3"/><path d="M6 9 L10.5 5 V9 Z" fill="#1a3a68"/><circle cx="3" cy="2.5" r="2.4" fill="url(#gBall)"/><circle cx="14" cy="2.5" r="2.4" fill="url(#gBall)"/><circle cx="2.5" cy="12" r="2.4" fill="url(#gBall)"/><circle cx="14.5" cy="12" r="2.4" fill="url(#gBall)"/></g></svg>
<div class="t" style="left:28.70px;top:8.75px;font-size:12.5px;line-height:12.5px;color:#9a9a9a;letter-spacing:0.171px;font-weight:normal;font-style:normal;transform-origin:0.00px 0;transform:scaleX(1.0000)">(No Project)</div>
<div class="t" style="left:102.80px;top:8.75px;font-size:12.5px;line-height:12.5px;color:#9a9a9a;letter-spacing:0.000px;font-weight:normal;font-style:normal;transform-origin:0.00px 0;transform:scaleX(1.0000)">-</div>
<div class="t" style="left:111.50px;top:8.75px;font-size:12.5px;line-height:12.5px;color:#9a9a9a;letter-spacing:0.000px;font-weight:normal;font-style:normal;transform-origin:0.00px 0;transform:scaleX(0.9810)">Source</div>
<div class="t" style="left:155.00px;top:8.75px;font-size:12.5px;line-height:12.5px;color:#9a9a9a;letter-spacing:0.257px;font-weight:normal;font-style:normal;transform-origin:1.00px 0;transform:scaleX(1.0000)">Insight</div>
<div class="t" style="left:198.10px;top:8.75px;font-size:12.5px;line-height:12.5px;color:#9a9a9a;letter-spacing:0.000px;font-weight:normal;font-style:normal;transform-origin:0.00px 0;transform:scaleX(0.9412)">4.0</div>
<div class="t" style="left:220.60px;top:8.75px;font-size:12.5px;line-height:12.5px;color:#9a9a9a;letter-spacing:0.000px;font-weight:normal;font-style:normal;transform-origin:0.00px 0;transform:scaleX(0.8852)">TRIAL</div>
<div class="t" style="left:6.00px;top:33.75px;font-size:12.5px;line-height:12.5px;color:#6b6b6b;letter-spacing:0.000px;font-weight:normal;font-style:normal;transform-origin:1.00px 0;transform:scaleX(0.9380)">File</div>
<div class="t" style="left:38.60px;top:33.75px;font-size:12.5px;line-height:12.5px;color:#6b6b6b;letter-spacing:0.111px;font-weight:normal;font-style:normal;transform-origin:1.00px 0;transform:scaleX(1.0000)">Edit</div>
<div class="t" style="left:75.50px;top:33.75px;font-size:12.5px;line-height:12.5px;color:#6b6b6b;letter-spacing:0.000px;font-weight:normal;font-style:normal;transform-origin:0.00px 0;transform:scaleX(0.9583)">Search</div>
<div class="t" style="left:127.40px;top:33.75px;font-size:12.5px;line-height:12.5px;color:#6b6b6b;letter-spacing:0.162px;font-weight:normal;font-style:normal;transform-origin:1.00px 0;transform:scaleX(1.0000)">Project</div>
<div class="t" style="left:182.60px;top:33.75px;font-size:12.5px;line-height:12.5px;color:#6b6b6b;letter-spacing:0.362px;font-weight:normal;font-style:normal;transform-origin:0.00px 0;transform:scaleX(1.0000)">Options</div>
<div class="t" style="left:242.40px;top:33.75px;font-size:12.5px;line-height:12.5px;color:#6b6b6b;letter-spacing:0.492px;font-weight:normal;font-style:normal;transform-origin:0.00px 0;transform:scaleX(1.0000)">Tools</div>
<div class="t" style="left:288.00px;top:33.75px;font-size:12.5px;line-height:12.5px;color:#6b6b6b;letter-spacing:0.000px;font-weight:normal;font-style:normal;transform-origin:0.00px 0;transform:scaleX(0.9698)">View</div>
<div class="t" style="left:329.00px;top:33.75px;font-size:12.5px;line-height:12.5px;color:#6b6b6b;letter-spacing:0.314px;font-weight:normal;font-style:normal;transform-origin:0.00px 0;transform:scaleX(1.0000)">Window</div>
<div class="t" style="left:389.00px;top:33.75px;font-size:12.5px;line-height:12.5px;color:#6b6b6b;letter-spacing:0.748px;font-weight:normal;font-style:normal;transform-origin:1.00px 0;transform:scaleX(1.0000)">Help</div>
<div class="t" style="left:368.60px;top:167.00px;font-size:13px;line-height:13px;color:#000;letter-spacing:0.000px;font-weight:normal;font-style:normal;transform-origin:1.00px 0;transform:scaleX(0.9803)">Page Setup</div>
<div class="t" style="left:380.30px;top:200.00px;font-size:13px;line-height:13px;color:#000;letter-spacing:0.000px;font-weight:normal;font-style:normal;transform-origin:0.00px 0;transform:scaleX(0.9651)">Columns:</div>
<div class="t" style="left:661.50px;top:201.50px;font-size:13px;line-height:13px;color:#000;letter-spacing:0.294px;font-weight:normal;font-style:normal;transform-origin:1.00px 0;transform:scaleX(1.0000)">Borders around page</div>
<div class="t" style="left:389.30px;top:246.00px;font-size:13px;line-height:13px;color:#000;letter-spacing:0.000px;font-weight:normal;font-style:normal;transform-origin:0.00px 0;transform:scaleX(0.9789)">Title Strings</div>
<div class="t" style="left:387.50px;top:270.00px;font-size:13px;line-height:13px;color:#000;letter-spacing:0.000px;font-weight:normal;font-style:normal;transform-origin:0.00px 0;transform:scaleX(0.9688)">Cover:</div>
<div class="t" style="left:447.40px;top:273.00px;font-size:13px;line-height:13px;color:#000;letter-spacing:0.384px;font-weight:normal;font-style:normal;transform-origin:0.00px 0;transform:scaleX(1.0000)">&amp;F&amp;/&amp;D  &amp;T</div>
<div class="t" style="left:386.70px;top:304.00px;font-size:13px;line-height:13px;color:#000;letter-spacing:0.110px;font-weight:normal;font-style:normal;transform-origin:1.00px 0;transform:scaleX(1.0000)">Header:</div>
<div class="t" style="left:447.40px;top:307.00px;font-size:13px;line-height:13px;color:#000;letter-spacing:0.000px;font-weight:normal;font-style:normal;transform-origin:0.00px 0;transform:scaleX(1.0000)">&amp;F</div>
<div class="t" style="left:386.70px;top:340.00px;font-size:13px;line-height:13px;color:#000;letter-spacing:0.121px;font-weight:normal;font-style:normal;transform-origin:1.00px 0;transform:scaleX(1.0000)">Footer:</div>
<div class="t" style="left:446.40px;top:343.00px;font-size:13px;line-height:13px;color:#000;letter-spacing:0.009px;font-weight:normal;font-style:normal;transform-origin:1.00px 0;transform:scaleX(1.0000)">Page &amp;P</div>
<div class="t" style="left:682.60px;top:272.00px;font-size:13px;line-height:13px;color:#000;letter-spacing:0.146px;font-weight:normal;font-style:normal;transform-origin:1.00px 0;transform:scaleX(1.0000)">Include cover page</div>
<div class="t" style="left:682.60px;top:306.00px;font-size:13px;line-height:13px;color:#000;letter-spacing:0.180px;font-weight:normal;font-style:normal;transform-origin:1.00px 0;transform:scaleX(1.0000)">Header per column</div>
<div class="t" style="left:682.60px;top:342.00px;font-size:13px;line-height:13px;color:#000;letter-spacing:0.171px;font-weight:normal;font-style:normal;transform-origin:1.00px 0;transform:scaleX(1.0000)">Footer per column</div>
<div class="t" style="left:395.30px;top:389.00px;font-size:13px;line-height:13px;color:#000;letter-spacing:-0.077px;font-weight:normal;font-style:normal;transform-origin:1.00px 0;transform:scaleX(1.0000)">Print Syntax Formatting</div>
<div class="t" style="left:682.60px;top:389.00px;font-size:13px;line-height:13px;color:#000;letter-spacing:0.083px;font-weight:normal;font-style:normal;transform-origin:1.00px 0;transform:scaleX(1.0000)">Print in color</div>
<div class="t" style="left:871.50px;top:205.00px;font-size:13px;line-height:13px;color:#000;letter-spacing:0.000px;font-weight:normal;font-style:normal;transform-origin:0.00px 0;transform:scaleX(1.0000)">OK</div>
<div class="t" style="left:861.20px;top:251.70px;font-size:12.6px;line-height:12.6px;color:#000;letter-spacing:0.000px;font-weight:normal;font-style:normal;transform-origin:0.00px 0;transform:scaleX(0.9765)">Cancel</div>
<div class="t" style="left:866.50px;top:297.80px;font-size:13px;line-height:13px;color:#000;letter-spacing:0.231px;font-weight:normal;font-style:normal;transform-origin:1.00px 0;transform:scaleX(1.0000)">Help</div>
<div class="t" style="left:859.20px;top:368.00px;font-size:13px;line-height:13px;color:#000;letter-spacing:0.293px;font-weight:normal;font-style:normal;transform-origin:1.00px 0;transform:scaleX(1.0000)">More...</div>
<div class="t" style="left:25.90px;top:518.80px;font-size:16px;line-height:16px;color:#000;letter-spacing:0.012px;font-weight:bold;font-style:italic;transform-origin:0.00px 0;transform:scaleX(1.0000)">Context</div>
</body></html>
